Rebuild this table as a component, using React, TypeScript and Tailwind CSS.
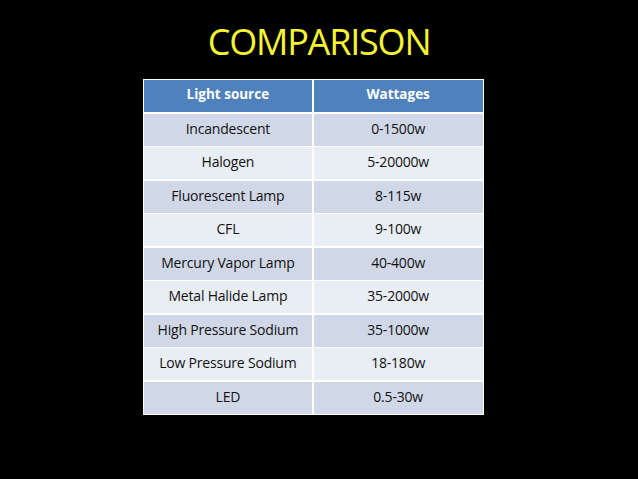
const rows = [
  ["Incandescent", "0-1500w"],
  ["Halogen", "5-20000w"],
  ["Fluorescent Lamp", "8-115w"],
  ["CFL", "9-100w"],
  ["Mercury Vapor Lamp", "40-400w"],
  ["Metal Halide Lamp", "35-2000w"],
  ["High Pressure Sodium", "35-1000w"],
  ["Low Pressure Sodium", "18-180w"],
  ["LED", "0.5-30w"],
]

export default function App() {
  return (
    <div className="w-[638px] h-[479px] bg-black flex flex-col items-center font-['Open_Sans',sans-serif]">
      <h1 className="mt-[17px] h-[50px] text-[36px] leading-[50px] text-[#f7f532] tracking-[-1.2px]">
        COMPARISON
      </h1>
      <div className="mt-[12px] ml-[-12px] w-[341px] bg-white p-px grid grid-cols-2 gap-x-[1.5px] gap-y-[1.5px]">
        <div className="h-8 pb-[3px] bg-[#4f81bd] flex items-center justify-center text-white font-bold text-[13.5px]">
          Light source
        </div>
        <div className="h-8 pb-[3px] bg-[#4f81bd] flex items-center justify-center text-white font-bold text-[13.5px]">
          Wattages
        </div>
        {rows.map(([name, watt], i) => {
          const bg = i % 2 === 0 ? "bg-[#d0d8e8]" : "bg-[#e9edf4]"
          return [
            <div
              key={name}
              className={`h-8 pb-[3px] ${bg} flex items-center justify-center text-[#111] text-[14px] tracking-[-0.2px]`}
            >
              {name}
            </div>,
            <div
              key={name + "-w"}
              className={`h-8 pb-[3px] ${bg} flex items-center justify-center text-[#111] text-[14px] tracking-[-0.2px]`}
            >
              {watt}
            </div>,
          ]
        })}
      </div>
    </div>
  )
}
